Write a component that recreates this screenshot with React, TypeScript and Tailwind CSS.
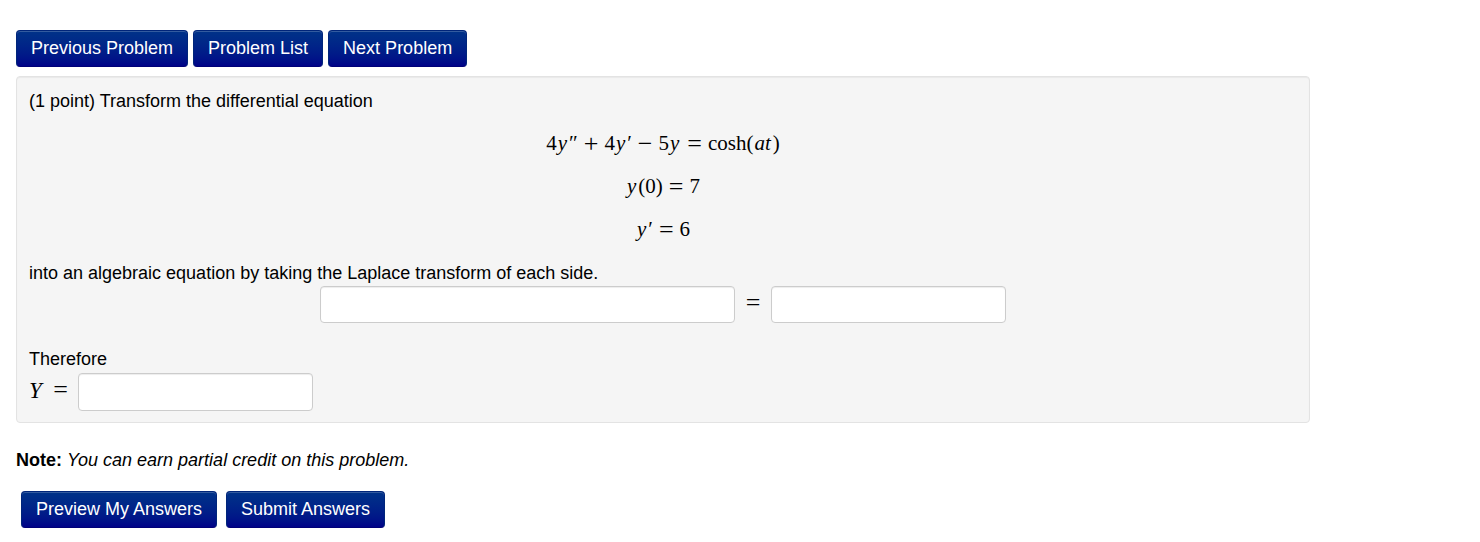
import { ButtonHTMLAttributes, InputHTMLAttributes, ReactNode } from "react"

const NavButton = (props: ButtonHTMLAttributes<HTMLButtonElement>) => (
    <button
        type="button"
        className="h-[37px] px-[14px] whitespace-nowrap cursor-pointer rounded-[4px] border border-[#00257a] border-b-[#000077] bg-linear-to-b from-[#003388] to-[#000088] bg-origin-border text-white leading-[25px] shadow-[inset_0_1px_0_rgba(255,255,255,0.2)]"
        {...props}
    />
)

const AnswerInput = ({ className, ...props }: InputHTMLAttributes<HTMLInputElement>) => (
    <input
        type="text"
        className={`px-2 rounded-[4px] border border-[#cccccc] bg-white shadow-[inset_0_1px_1px_rgba(0,0,0,0.075)] ${className}`}
        {...props}
    />
)

const Equation = ({ children }: { children: ReactNode }) => (
    <p className="flex h-[43px] items-center justify-center whitespace-nowrap">
        {children}
    </p>
)

const Op = ({ children }: { children: ReactNode }) => (
    <span className="mx-[6px] text-[26px] leading-none">{children}</span>
)

const Var = ({ children }: { children: ReactNode }) => (
    <i className="pl-px pr-[2px]">{children}</i>
)

const App = () => {
    return (
        <main className="px-4 pt-[30px] pb-3 font-['Liberation_Sans',Arial,sans-serif] text-[18px] leading-[25px] text-black">
            <nav className="flex gap-[5px] mb-[9px]">
                <NavButton>Previous Problem</NavButton>
                <NavButton>Problem List</NavButton>
                <NavButton>Next Problem</NavButton>
            </nav>

            <form>
                <section className="mr-[154px] px-3 pt-3 pb-[11px] rounded-[4px] border border-[#e3e3e3] bg-[#f5f5f5] shadow-[inset_0_1px_1px_rgba(0,0,0,0.05)]">
                    <p>(1 point) Transform the differential equation</p>

                    <div className="mt-2 mb-[10px] font-['Liberation_Serif',serif] text-[21px]">
                        <Equation>
                            4<Var>y</Var>″<Op>+</Op>4<Var>y</Var>′<Op>−</Op>5<Var>y</Var><Op>=</Op>cosh(<Var>at</Var>)
                        </Equation>
                        <Equation>
                            <Var>y</Var>(0)<Op>=</Op>7
                        </Equation>
                        <Equation>
                            <Var>y</Var>′<Op>=</Op>6
                        </Equation>
                    </div>

                    <p>into an algebraic equation by taking the Laplace transform of each side.</p>

                    <div className="flex justify-center items-center mb-6">
                        <AnswerInput className="w-[415px] h-[37px]" aria-label="Left side" />
                        <span className="w-9 pb-1 text-center font-['Liberation_Serif',serif] text-[26px]">=</span>
                        <AnswerInput className="w-[235px] h-[37px]" aria-label="Right side" />
                    </div>

                    <p>Therefore</p>
                    <div className="flex items-center mt-px">
                        <label
                            htmlFor="transform"
                            className="flex w-[49px] pr-1 pb-1 items-center justify-between font-['Liberation_Serif',serif] text-[23px]"
                        >
                            <i>Y</i>
                            <Op>=</Op>
                        </label>
                        <AnswerInput id="transform" className="w-[235px] h-[38px]" />
                    </div>
                </section>

                <p className="mt-[25px] mb-[18px]">
                    <b>Note:</b> <i>You can earn partial credit on this problem.</i>
                </p>

                <div className="flex gap-[9px] pl-[5px]">
                    <NavButton>Preview My Answers</NavButton>
                    <NavButton type="submit">Submit Answers</NavButton>
                </div>
            </form>
        </main>
    )
}

export default App
